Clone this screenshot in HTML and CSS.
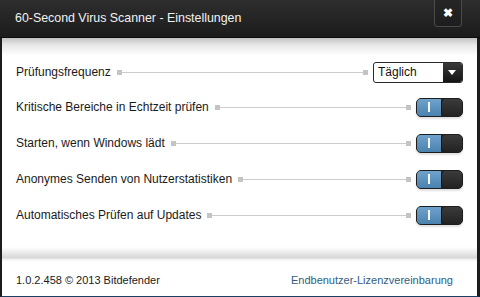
FILE: index.html
```html
<!DOCTYPE html>
<html lang="de">
<head>
    <meta charset="UTF-8">
    <title>60-Second Virus Scanner - Einstellungen</title>
    <link rel="stylesheet" href="styles.css">
</head>
<body>
    <div class="window">
        <div class="titlebar">
            <span class="title">60-Second Virus Scanner - Einstellungen</span>
            <button class="close-btn">&#10006;</button>
        </div>
        <div class="content">
            <div class="setting-row first">
                <span class="label">Prüfungsfrequenz</span>
                <span class="connector"></span>
                <div class="dropdown">
                    <span class="dropdown-value">Täglich</span>
                    <span class="dropdown-arrow"></span>
                </div>
            </div>
            <div class="setting-row">
                <span class="label">Kritische Bereiche in Echtzeit prüfen</span>
                <span class="connector"></span>
                <div class="toggle"><span class="toggle-on"><i></i></span><span class="toggle-knob"></span></div>
            </div>
            <div class="setting-row">
                <span class="label">Starten, wenn Windows lädt</span>
                <span class="connector"></span>
                <div class="toggle"><span class="toggle-on"><i></i></span><span class="toggle-knob"></span></div>
            </div>
            <div class="setting-row">
                <span class="label">Anonymes Senden von Nutzerstatistiken</span>
                <span class="connector"></span>
                <div class="toggle"><span class="toggle-on"><i></i></span><span class="toggle-knob"></span></div>
            </div>
            <div class="setting-row">
                <span class="label">Automatisches Prüfen auf Updates</span>
                <span class="connector"></span>
                <div class="toggle"><span class="toggle-on"><i></i></span><span class="toggle-knob"></span></div>
            </div>
        </div>
        <div class="footer">
            <span class="version">1.0.2.458 © 2013 Bitdefender</span>
            <a class="eula" href="#">Endbenutzer-Lizenzvereinbarung</a>
        </div>
    </div>
</body>
</html>
```

FILE: styles.css
```css
html, body {
    margin: 0;
    padding: 0;
    background-color: #fff;
}
body {
    font-family: "Liberation Sans", Arial, sans-serif;
    font-size: 12px;
    color: #1a1a1a;
}
.window {
    width: 480px;
    height: 297px;
    box-sizing: border-box;
    border-left: 2px solid #1c1c1c;
    border-right: 3px solid #1c1c1c;
    border-bottom: 1px solid #1d3f62;
    display: flex;
    flex-direction: column;
    background-color: #fff;
}
.titlebar {
    height: 37px;
    flex-shrink: 0;
    display: flex;
    align-items: flex-start;
    justify-content: space-between;
    background: linear-gradient(to bottom, #2e2e2e, #1b1b1b);
    border-bottom: 1px solid #0c0c0c;
    margin: 0 -3px 0 -2px;
    padding: 0 18px 0 15px;
}
.title {
    color: #f2f2f2;
    font-size: 12.4px;
    line-height: 37px;
}
.close-btn {
    width: 28px;
    height: 27px;
    padding: 0;
    border: 1px solid #4a4a4a;
    border-top: none;
    border-radius: 0 0 4px 4px;
    background: linear-gradient(to bottom, #262626, #1d1d1d);
    color: #fff;
    font-size: 12px;
    font-weight: bold;
    line-height: 24px;
}
.content {
    flex: 1;
    padding-top: 17px;
    background: linear-gradient(to bottom, #c2c2c2 0px, #e8e8e8 7px, #fff 18px);
}
.setting-row {
    height: 36px;
    display: flex;
    align-items: center;
    padding: 0 14px 0 14px;
}
.setting-row.first {
    height: 34px;
}
.label {
    font-size: 12px;
    white-space: nowrap;
    margin-right: 6px;
}
.connector {
    flex: 1;
    height: 5px;
    margin-right: 5px;
    background:
        linear-gradient(#c4c4c4, #c4c4c4) left center / 5px 5px no-repeat,
        linear-gradient(#c4c4c4, #c4c4c4) right center / 5px 5px no-repeat,
        linear-gradient(#cdcdcd, #cdcdcd) center / 100% 1px no-repeat;
}
.dropdown {
    width: 90px;
    height: 21px;
    box-sizing: border-box;
    border: 1px solid #2a2a2a;
    border-radius: 3px;
    display: flex;
    background: #fff;
    overflow: hidden;
}
.dropdown-value {
    flex: 1;
    font-size: 12px;
    line-height: 19px;
    padding-left: 4px;
    color: #111;
}
.dropdown-arrow {
    width: 19px;
    background: linear-gradient(to bottom, #3a3a3a, #151515);
    position: relative;
}
.dropdown-arrow::after {
    content: "";
    position: absolute;
    left: 5px;
    top: 7px;
    border-left: 4px solid transparent;
    border-right: 4px solid transparent;
    border-top: 5px solid #fff;
}
.toggle {
    width: 47px;
    height: 19px;
    box-sizing: border-box;
    border: 1px solid #1e1e1e;
    border-radius: 5px;
    display: flex;
    overflow: hidden;
    background: #2a2a2a;
    box-shadow: 0 2px 2px rgba(0, 0, 0, 0.12);
}
.toggle-on {
    width: 24px;
    background: linear-gradient(to bottom, #6fa3cc, #4a82ae);
    display: flex;
    align-items: center;
    justify-content: center;
}
.toggle-on i {
    width: 2px;
    height: 10px;
    background: #f4f8fb;
}
.toggle-knob {
    flex: 1;
    border-radius: 4px;
    background: linear-gradient(to bottom, #3b3b3b, #222);
    border-left: 1px solid #111;
}
.footer {
    height: 40px;
    box-sizing: border-box;
    flex-shrink: 0;
    display: flex;
    align-items: center;
    justify-content: space-between;
    padding: 6px 24px 0 14px;
    border-top: 1px solid #fff;
    position: relative;
    background: linear-gradient(to bottom, #d2d2d2 0px, #f6f6f6 3px, #fff 5px);
}
.footer::before {
    content: "";
    position: absolute;
    left: 0;
    right: 0;
    top: -10px;
    height: 10px;
    background: linear-gradient(to bottom, #fff, #dadada);
}
.version {
    font-size: 11px;
}
.eula {
    font-size: 11px;
    color: #2f5d7f;
    text-decoration: none;
}
```
